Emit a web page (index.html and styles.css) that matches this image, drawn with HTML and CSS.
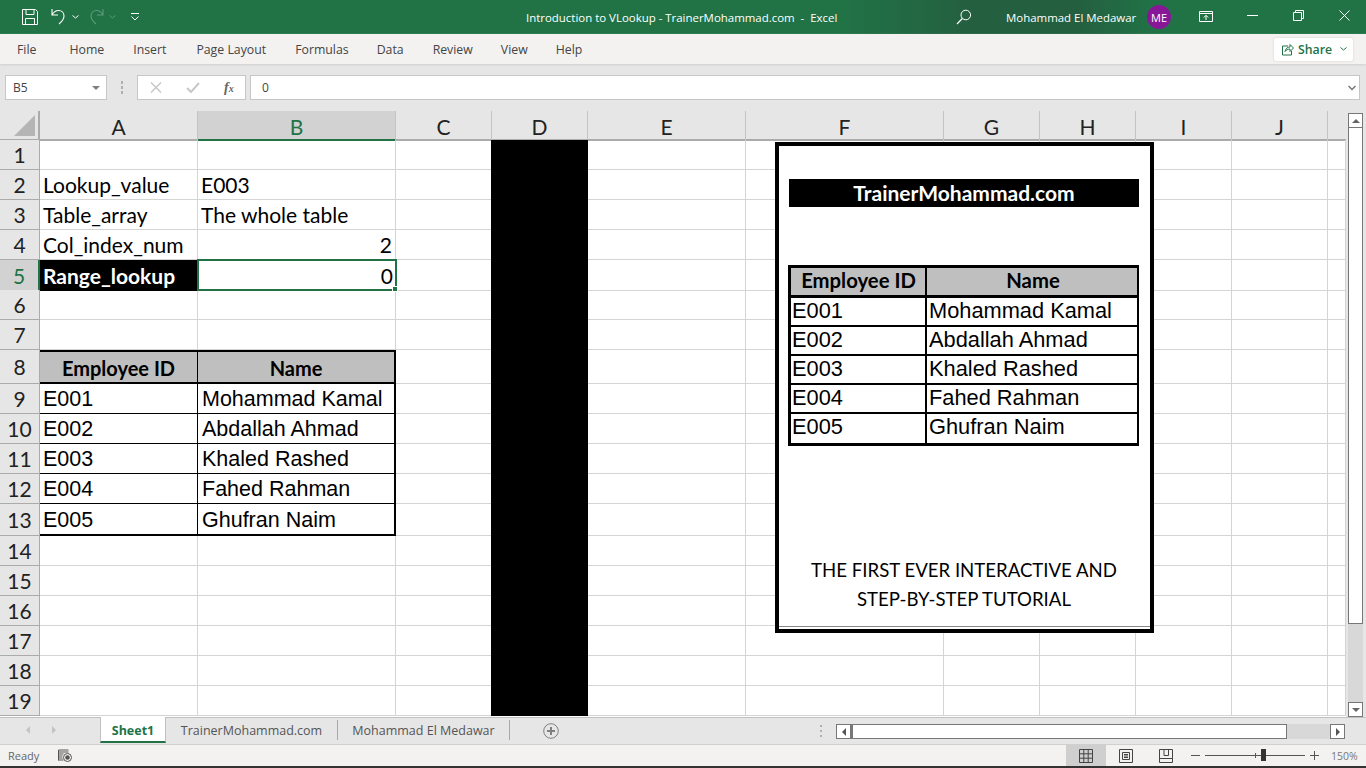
FILE: index.html
```html
<!DOCTYPE html>
<html lang="en">
<head>
<meta charset="utf-8">
<title>Introduction to VLookup - TrainerMohammad.com - Excel</title>
<link rel="stylesheet" href="styles.css">
</head>
<body>
<div class="app">
  <header class="titlebar">
    <div class="qat">
      <svg class="ic save" width="18" height="18" viewBox="0 0 18 18"><path d="M1.500 1.500h13l2 2v13h-15zM5 1.500v5h8v-5M4.500 16.500v-6h9v6" fill="none" stroke="#fff"/></svg>
      <svg class="ic undo" width="18" height="18" viewBox="0 0 18 18"><path d="M2 1v6h6M2.300 6.500C4 3.500 6 2.500 8.500 2.500c3.500 0 5.500 2.700 5.500 5.500 0 3-2 5.500-5 8" fill="none" stroke="#fff" stroke-width="1.100"/></svg>
      <svg class="ic caret" width="7" height="4" viewBox="0 0 7 4"><path d="M.5.500l3 2.500 3-2.500" fill="none" stroke="#fff"/></svg>
      <svg class="ic redo" width="18" height="18" viewBox="0 0 18 18"><path d="M16 1v6h-6M15.700 6.500C14 3.500 12 2.500 9.500 2.500 6 2.500 4 5.200 4 8c0 3 2 5.500 5 8" fill="none" stroke="#5f9a7c" stroke-width="1.100"/></svg>
      <svg class="ic caret dim" width="7" height="4" viewBox="0 0 7 4"><path d="M.5.500l3 2.500 3-2.500" fill="none" stroke="#5f9a7c"/></svg>
      <svg class="ic custom" width="8" height="8" viewBox="0 0 8 8"><path d="M0 .5h8M.5 3.500l3.500 3.500 3.500-3.500" fill="none" stroke="#fff"/></svg>
    </div>
    <div class="doc-title">Introduction to VLookup - TrainerMohammad.com&nbsp; -&nbsp; Excel</div>
    <div class="win">
      <svg class="search" width="16" height="16" viewBox="0 0 16 16"><circle cx="9.800" cy="6" r="4.800" fill="none" stroke="#fff"/><path d="M6.300 9.500L1 15" stroke="#fff" stroke-width="1.200"/></svg>
      <span class="user">Mohammad El Medawar</span>
      <span class="avatar">ME</span>
      <svg class="ribbon-opt" width="14" height="11" viewBox="0 0 14 11"><path d="M.5 .5h13v10H.5zM.5 2.500h13M7 9V4.500M4.800 6.500L7 4.300l2.200 2.200" fill="none" stroke="#fff"/></svg>
      <svg class="min" width="11" height="1" viewBox="0 0 11 1"><path d="M0 .5h11" stroke="#fff"/></svg>
      <svg class="max" width="11" height="11" viewBox="0 0 11 11"><path d="M.5 2.500h8v8h-8zM2.500 2.500v-2h8v8h-2" fill="none" stroke="#fff"/></svg>
      <svg class="close" width="11" height="11" viewBox="0 0 11 11"><path d="M.5.500l10 10M10.500.500l-10 10" stroke="#fff"/></svg>
    </div>
  </header>

  <nav class="tabs">
    <span class="t-file">File</span><span class="t-home">Home</span><span class="t-insert">Insert</span><span class="t-page">Page Layout</span><span class="t-formulas">Formulas</span><span class="t-data">Data</span><span class="t-review">Review</span><span class="t-view">View</span><span class="t-help">Help</span>
    <div class="share">
      <svg width="13" height="13" viewBox="0 0 13 13"><path d="M7 3H1.500v9h9V8M4 8.500C4.500 5.500 6.500 4 9 4V1.500L12.500 5 9 8.500V6C7 6 5 7 4 8.500z" fill="none" stroke="#217346"/></svg>
      <span>Share</span>
      <svg class="share-c" width="7" height="4" viewBox="0 0 7 4"><path d="M.5.500l3 2.500 3-2.500" fill="none" stroke="#217346"/></svg>
    </div>
  </nav>

  <section class="fbar">
    <div class="namebox"><span>B5</span><i class="tri"></i></div>
    <div class="dots"><i></i><i></i><i></i></div>
    <div class="fbtns">
      <svg width="12" height="11" viewBox="0 0 12 11"><path d="M1 .5l10 10M11 .5l-10 10" stroke="#c8c8c8" stroke-width="1.500"/></svg>
      <svg class="chk" width="14" height="11" viewBox="0 0 14 11"><path d="M1 6l4 4 8-9" fill="none" stroke="#c8c8c8" stroke-width="2"/></svg>
      <span class="fx">f<sub>x</sub></span>
    </div>
    <div class="finput"><span>0</span><svg width="8" height="6" viewBox="0 0 8 6"><path d="M.5 1l3.500 3.500L7.500 1" fill="none" stroke="#777" stroke-width="1.500"/></svg></div>
  </section>

  <main class="sheet-wrap">
    <div class="sheet">
      <div class="row head"><b class="corner"><svg width="21" height="21" viewBox="0 0 21 21"><path d="M21 0v21H0z" fill="#b5b5b5"/></svg></b><b>A</b><b class="sel-col">B</b><b>C</b><b>D</b><b>E</b><b>F</b><b>G</b><b>H</b><b>I</b><b>J</b><b></b></div>
      <div class="row"><b>1</b><i></i><i></i><i></i><i class="blk"></i><i></i><i></i><i></i><i></i><i></i><i></i><i></i></div>
      <div class="row"><b>2</b><i>Lookup_value</i><i>E003</i><i></i><i class="blk"></i><i></i><i></i><i></i><i></i><i></i><i></i><i></i></div>
      <div class="row"><b>3</b><i>Table_array</i><i>The whole table</i><i></i><i class="blk"></i><i></i><i></i><i></i><i></i><i></i><i></i><i></i></div>
      <div class="row"><b>4</b><i>Col_index_num</i><i class="num">2</i><i></i><i class="blk"></i><i></i><i></i><i></i><i></i><i></i><i></i><i></i></div>
      <div class="row"><b class="sel-row">5</b><i class="inv">Range_lookup</i><i class="num active">0<u class="handle"></u></i><i></i><i class="blk"></i><i></i><i></i><i></i><i></i><i></i><i></i><i></i></div>
      <div class="row"><b>6</b><i></i><i></i><i></i><i class="blk"></i><i></i><i></i><i></i><i></i><i></i><i></i><i></i></div>
      <div class="row"><b>7</b><i></i><i></i><i></i><i class="blk"></i><i></i><i></i><i></i><i></i><i></i><i></i><i></i></div>
      <div class="row tall"><b>8</b><i class="th first">Employee ID</i><i class="th">Name</i><i></i><i class="blk"></i><i></i><i></i><i></i><i></i><i></i><i></i><i></i></div>
      <div class="row"><b>9</b><i class="td first">E001</i><i class="td">Mohammad Kamal</i><i></i><i class="blk"></i><i></i><i></i><i></i><i></i><i></i><i></i><i></i></div>
      <div class="row"><b>10</b><i class="td first">E002</i><i class="td">Abdallah Ahmad</i><i></i><i class="blk"></i><i></i><i></i><i></i><i></i><i></i><i></i><i></i></div>
      <div class="row"><b>11</b><i class="td first">E003</i><i class="td">Khaled Rashed</i><i></i><i class="blk"></i><i></i><i></i><i></i><i></i><i></i><i></i><i></i></div>
      <div class="row"><b>12</b><i class="td first">E004</i><i class="td">Fahed Rahman</i><i></i><i class="blk"></i><i></i><i></i><i></i><i></i><i></i><i></i><i></i></div>
      <div class="row last"><b>13</b><i class="td first">E005</i><i class="td">Ghufran Naim</i><i></i><i class="blk"></i><i></i><i></i><i></i><i></i><i></i><i></i><i></i></div>
      <div class="row"><b>14</b><i></i><i></i><i></i><i class="blk"></i><i></i><i></i><i></i><i></i><i></i><i></i><i></i></div>
      <div class="row"><b>15</b><i></i><i></i><i></i><i class="blk"></i><i></i><i></i><i></i><i></i><i></i><i></i><i></i></div>
      <div class="row"><b>16</b><i></i><i></i><i></i><i class="blk"></i><i></i><i></i><i></i><i></i><i></i><i></i><i></i></div>
      <div class="row"><b>17</b><i></i><i></i><i></i><i class="blk"></i><i></i><i></i><i></i><i></i><i></i><i></i><i></i></div>
      <div class="row"><b>18</b><i></i><i></i><i></i><i class="blk"></i><i></i><i></i><i></i><i></i><i></i><i></i><i></i></div>
      <div class="row"><b>19</b><i></i><i></i><i></i><i class="blk"></i><i></i><i></i><i></i><i></i><i></i><i></i><i></i></div>

      <figure class="pic">
        <div class="pic-banner">TrainerMohammad.com</div>
        <div class="pic-table">
          <div class="pr phead"><span>Employee ID</span><span>Name</span></div>
          <div class="pr"><span>E001</span><span>Mohammad Kamal</span></div>
          <div class="pr"><span>E002</span><span>Abdallah Ahmad</span></div>
          <div class="pr"><span>E003</span><span>Khaled Rashed</span></div>
          <div class="pr"><span>E004</span><span>Fahed Rahman</span></div>
          <div class="pr"><span>E005</span><span>Ghufran Naim</span></div>
        </div>
        <figcaption>THE FIRST EVER INTERACTIVE AND<br>STEP-BY-STEP TUTORIAL</figcaption>
      </figure>
    </div>
    <aside class="vscroll">
      <div class="sbtn"><i class="up"></i></div>
      <div class="vthumb"></div>
      <div class="sfill"></div>
      <div class="sbtn"><i class="down"></i></div>
    </aside>
  </main>

  <section class="sheetbar">
    <div class="nav"><i class="nl"></i><i class="nr"></i></div>
    <div class="stab active-tab">Sheet1</div>
    <div class="stab s2">TrainerMohammad.com</div>
    <div class="stab s3">Mohammad El Medawar</div>
    <svg class="addsheet" width="16" height="16" viewBox="0 0 16 16"><circle cx="8" cy="8" r="7.300" fill="none" stroke="#808080"/><path d="M8 4v8M4 8h8" stroke="#808080" stroke-width="2"/></svg>
    <div class="vdots"><i></i><i></i><i></i></div>
    <div class="hscroll">
      <div class="hbtn"><i class="hl"></i></div>
      <div class="hthumb"></div>
      <div class="hfill"></div>
      <div class="hbtn"><i class="hr"></i></div>
    </div>
  </section>

  <footer class="status">
    <span class="ready">Ready</span>
    <svg class="macro" width="14" height="13" viewBox="0 0 14 13"><path d="M.5 1h10M.5 3h10M.5 5h5M.5 7h4M.5 9h4M.5 11h5M.5 1v10.500" fill="none" stroke="#555"/><circle cx="9.500" cy="8.500" r="4" fill="none" stroke="#555"/><circle cx="9.500" cy="8.500" r="2.300" fill="#555"/></svg>
    <div class="status-r">
      <div class="vw on"><svg width="14" height="14" viewBox="0 0 14 14"><path d="M.5.500h13v13H.5zM.5 4.800h13M.5 9.200h13M4.800.500v13M9.200.500v13" fill="none" stroke="#444"/></svg></div>
      <div class="vw"><svg width="14" height="14" viewBox="0 0 14 14"><path d="M.5.500h13v13H.5zM3.500 3.500h7v7h-7zM5 5.500h4M5 7h4M5 8.500h4" fill="none" stroke="#444"/></svg></div>
      <div class="vw"><svg width="14" height="14" viewBox="0 0 14 14"><path d="M.5.500h13v13H.5zM.5 9.500h13M5 .500v6h4.500v-6" fill="none" stroke="#444"/></svg></div>
      <div class="zoom">
        <span class="zminus"></span>
        <div class="slider"><i class="tick"></i><i class="knob"></i></div>
        <span class="zplus"></span>
        <span class="pct">150%</span>
      </div>
    </div>
  </footer>
  <div class="bottomline"></div>
</div>
</body>
</html>
```
FILE: styles.css
```css
* { box-sizing: border-box; }
html, body { margin: 0; padding: 0; height: 100%; overflow: hidden; }
body { font-family: "Open Sans", "Noto Sans", sans-serif; color: #444; }
.app { width: 1366px; height: 768px; display: flex; flex-direction: column; background: #e6e6e6; }

/* title bar */
.titlebar { height: 34px; flex: none; background: #217346; color: #fff; display: flex; align-items: center; position: relative; }
.qat { display: flex; align-items: center; padding-left: 21px; width: 526px; flex: none; }
.qat .ic { flex: none; }
.undo { margin-left: 11px; }
.qat .caret { margin-left: 4px; }
.redo { margin-left: 8px; }
.qat .caret.dim { margin-left: 4px; }
.custom { margin-left: 15px; }
.doc-title { font-size: 11.450px; white-space: nowrap; width: 313px; flex: none; }
.win { display: flex; align-items: center; flex: 1; position: relative; height: 34px; background: linear-gradient(90deg, #217346, #245f40 25%, #245f40 45%, #217346 60%); }
.search { margin-left: 117px; flex: none; }
.user { font-size: 11.450px; margin-left: 34px; white-space: nowrap; width: 130px; flex: none; }
.avatar { width: 24px; height: 24px; border-radius: 50%; background: #881798; font-size: 11px; display: flex; align-items: center; justify-content: center; margin-left: 11px; flex: none; }
.ribbon-opt { margin-left: 28px; flex: none; margin-top: -2px; }
.min { margin-left: 34px; flex: none; margin-top: -4px; }
.max { margin-left: 35px; flex: none; margin-top: -3px; }
.close { margin-left: 35px; flex: none; margin-top: -3px; }

/* ribbon tabs */
.tabs { height: 30px; flex: none; background: #f3f2f1; display: flex; align-items: center; font-size: 12.300px; color: #444; position: relative; box-shadow: 0 1px 2px #cfcfcf; z-index: 1; }
.tabs > span { white-space: nowrap; }
.t-file { margin-left: 17px; }
.t-home { margin-left: 33px; }
.t-insert { margin-left: 29px; }
.t-page { margin-left: 30px; }
.t-formulas { margin-left: 29px; }
.t-data { margin-left: 28px; }
.t-review { margin-left: 29px; }
.t-view { margin-left: 28px; }
.t-help { margin-left: 28px; }
.share { margin-left: auto; margin-right: 13px; width: 79px; height: 23px; background: #fff; border-radius: 2px; box-shadow: 0 0 2px #c8c8c8; display: flex; align-items: center; padding-left: 7px; color: #217346; font-weight: 600; font-size: 12.300px; }
.share span { margin-left: 4px; }
.share-c { margin-left: auto; margin-right: 6px; }

/* formula bar */
.fbar { height: 47px; flex: none; display: flex; align-items: flex-start; padding: 11px 6px 0 5px; background: #e6e6e6; }
.namebox { width: 102px; height: 25px; background: #fff; border: 1px solid #c6c6c6; display: flex; align-items: center; padding-left: 7px; font-size: 12px; }
.tri { margin-left: auto; margin-right: 6px; border-left: 4px solid transparent; border-right: 4px solid transparent; border-top: 4px solid #808080; }
.dots { width: 30px; height: 25px; display: flex; flex-direction: column; align-items: center; justify-content: center; gap: 2px; }
.dots i, .vdots i { width: 2px; height: 2px; background: #b0b0b0; display: block; }
.dots i { height: 3px; }
.fbtns { width: 109px; height: 25px; background: #fff; border: 1px solid #c6c6c6; display: flex; align-items: center; padding-left: 12px; }
.chk { margin-left: 24px; }
.fx { margin-left: 24px; font-family: "Liberation Serif", serif; font-style: italic; font-weight: bold; font-size: 14px; color: #666; line-height: 1; }
.fx sub { font-size: 10px; vertical-align: baseline; }
.finput { width: 1110px; height: 25px; margin-left: 4px; background: #fff; border: 1px solid #c6c6c6; display: flex; align-items: center; padding-left: 11px; font-size: 12px; }
.finput svg { margin-left: auto; margin-right: 3px; }

/* sheet */
.sheet-wrap { height: 606px; flex: none; display: flex; }
.sheet { width: 1346px; flex: none; position: relative; overflow: hidden; background: #fff; }
.row { display: grid; grid-template-columns: 40px 158px 198px 96px 96px 158px 198px 96px 96px 96px 96px 18px; height: 30px; }
.row.tall { height: 34px; }
.row.last { height: 32px; }
.row > b { font-family: "Lato", sans-serif; font-weight: 400; font-size: 21px; color: #222; background: #e6e6e6; border-right: 1px solid #ababab; border-bottom: 1px solid #ababab; display: flex; align-items: center; justify-content: center; }
.row > i { font-family: "Lato", sans-serif; font-style: normal; font-size: 21px; color: #000; border-right: 1px solid #d4d4d4; border-bottom: 1px solid #d4d4d4; padding: 0 3px; display: flex; align-items: center; white-space: nowrap; position: relative; }
.row.head { height: 29px; }
.row.head > b { border-bottom: 2px solid #ababab; border-right: 1px solid #c4c4c4; padding-top: 3px; }
.row.head > b.corner { justify-content: flex-end; align-items: flex-end; padding: 0 3px 3px 0; border-right: 2px solid #ababab; }
.row.head > b:last-child { border-right: 0; border-bottom: 2px solid #ababab; }
.row > b.sel-col { background: #d2d2d2; color: #217346; border-bottom: 2px solid #217346; }
.row > b.sel-row { background: #d2d2d2; color: #217346; border-right: 2px solid #217346; }
.row > i.blk { background: #000; border-color: #000; margin-left: -1px; }
.row > i.num { justify-content: flex-end; }
.row > i.inv { background: #000; color: #fff; font-weight: 700; border-color: #000; }
.row > i.active { border: 2px solid #217346; padding-right: 2px; margin: -1px -1px 0 -1px; z-index: 2; height: 32px; }
.handle { position: absolute; right: -3px; bottom: -3px; width: 6px; height: 6px; background: #217346; border: 1px solid #fff; box-sizing: border-box; }
.row > i.th { background: #bfbfbf; font-weight: 700; font-size: 20px; justify-content: center; padding-top: 1px; border-top: 2px solid #000; border-bottom: 2px solid #000; border-right: 2px solid #000; }
.row > i.th.first { border-left: 0; border-right: 1px solid #000; }
.row > i.td { font-family: "Liberation Sans", sans-serif; font-size: 21.500px; padding-top: 1px; border-bottom: 1px solid #000; border-right: 2px solid #000; }
.row > i.td + i.td { padding-left: 4px; }
.row > i.td.first { border-right: 1px solid #000; }
.row.last > i.td { padding-top: 2px; border-bottom: 2px solid #000; }

/* floating picture */
.pic { position: absolute; left: 775px; top: 31px; width: 379px; height: 491px; margin: 0; background: #fff; border: 4px solid #000; box-shadow: none; padding: 33px 11px 0 10px; display: flex; flex-direction: column; }
.pic::after { content: ""; position: absolute; left: 0; right: 0; bottom: 2px; height: 1px; background: #888; }
.pic-banner { height: 28px; background: #000; color: #fff; font-family: "Lato", sans-serif; font-weight: 700; font-size: 21px; padding-bottom: 1px; display: flex; align-items: center; justify-content: center; }
.pic-table { margin-top: 58px; border: 3px solid #000; border-right-width: 2px; margin-left: -1px; }
.pr { display: grid; grid-template-columns: 136px 1fr; height: 29px; border-bottom: 2px solid #000; }
.pr:last-child { border-bottom: 0; height: 29px; }
.pr span { font-family: "Liberation Sans", sans-serif; font-size: 21.800px; color: #000; padding: 0 0 2px 1px; display: flex; align-items: center; white-space: nowrap; }
.pr span:first-child { border-right: 2px solid #000; }
.pr span + span { padding-left: 2px; }
.pr:last-child span { padding-bottom: 4px; }
.phead { background: #bfbfbf; height: 30px; border-bottom-width: 3px; }
.phead span { font-family: "Lato", sans-serif; font-weight: 700; font-size: 20.300px; justify-content: center; padding-bottom: 3px; }
figcaption { margin-top: 110px; text-align: center; font-family: "Lato", sans-serif; font-size: 18.600px; line-height: 29px; color: #000; }

/* vertical scrollbar */
.vscroll { flex: 1; display: flex; flex-direction: column; padding: 2px 3px 0 2px; background: #e6e6e6; }
.sbtn { height: 15px; flex: none; background: #fff; border: 1px solid #777; display: flex; align-items: center; justify-content: center; }
.up { border-left: 4px solid transparent; border-right: 4px solid transparent; border-bottom: 4px solid #666; }
.down { border-left: 4px solid transparent; border-right: 4px solid transparent; border-top: 4px solid #666; }
.vthumb { height: 496px; background: #fff; border: 1px solid #777; border-top: 0; flex: none; }
.sfill { flex: 1; background: #d8d8d8; }

/* sheet tabs */
.sheetbar { height: 28px; flex: none; display: flex; align-items: flex-start; font-size: 12.500px; color: #555; background: #e6e6e6; border-top: 1px solid #c0c0c0; border-bottom: 1px solid #d0d0d0; }
.nav { width: 100px; height: 24px; display: flex; align-items: center; padding-left: 26px; gap: 22px; }
.nl { border-top: 4px solid transparent; border-bottom: 4px solid transparent; border-right: 4px solid #c4c4c4; }
.nr { border-top: 4px solid transparent; border-bottom: 4px solid transparent; border-left: 4px solid #c4c4c4; }
.stab { height: 24px; display: flex; align-items: center; justify-content: center; white-space: nowrap; }
.active-tab { width: 66px; margin-top: -1px; height: 26px; padding-top: 2px; background: #fff; color: #217346; font-weight: 700; border: 1px solid #c0c0c0; border-top: 0; border-bottom: 2px solid #217346; }
.s2 { width: 172px; border-right: 1px solid #a8a8a8; height: 20px; margin-top: 2px; }
.s3 { width: 172px; border-right: 1px solid #a8a8a8; height: 20px; margin-top: 2px; }
.addsheet { margin: 5px 0 0 33px; flex: none; }
.vdots { margin: 7px 0 0 261px; width: 2px; display: flex; flex-direction: column; gap: 3px; }
.hscroll { margin: 6px 0 0 14px; width: 509px; height: 15px; display: flex; background: #d8d8d8; }
.hbtn { width: 15px; flex: none; background: #fff; border: 1px solid #777; display: flex; align-items: center; justify-content: center; }
.hl { border-top: 4px solid transparent; border-bottom: 4px solid transparent; border-right: 4px solid #555; }
.hr { border-top: 4px solid transparent; border-bottom: 4px solid transparent; border-left: 4px solid #555; }
.hthumb { width: 436px; flex: none; background: #fff; border: 1px solid #777; border-left: 2px solid #777; }
.hfill { flex: 1; }

/* status bar */
.status { height: 21px; flex: none; background: #f3f2f1; display: flex; align-items: center; font-size: 11px; color: #666; }
.ready { margin-left: 8px; }
.macro { margin-left: 19px; flex: none; }
.status-r { margin-left: auto; display: flex; align-items: center; height: 21px; }
.vw { width: 40px; height: 21px; display: flex; align-items: center; justify-content: center; }
.vw.on { background: #cfcfcf; }
.zoom { display: flex; align-items: center; width: 180px; }
.zminus { width: 9px; height: 1px; background: #555; margin-left: 5px; flex: none; }
.slider { width: 100px; height: 1px; background: #555; margin-left: 5px; position: relative; flex: none; }
.tick { position: absolute; left: 50px; top: -2px; width: 1px; height: 5px; background: #555; }
.knob { position: absolute; left: 56px; top: -6px; width: 5px; height: 12px; background: #333; }
.zplus { width: 9px; height: 9px; margin-left: 5px; flex: none; background: linear-gradient(#555, #555) center / 9px 1px no-repeat, linear-gradient(#555, #555) center / 1px 9px no-repeat; }
.pct { margin-left: 12px; font-size: 10.500px; color: #777; white-space: nowrap; }
.bottomline { height: 2px; flex: none; background: #333; }
```
